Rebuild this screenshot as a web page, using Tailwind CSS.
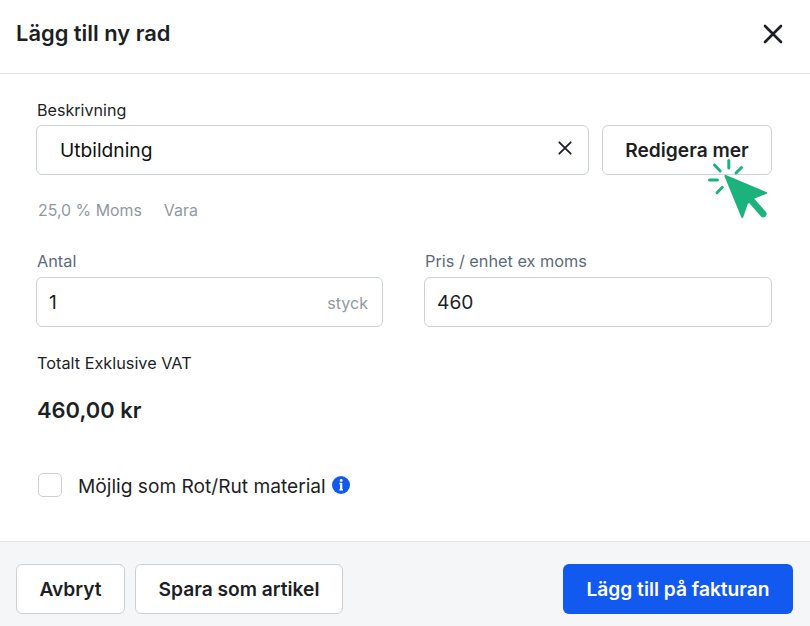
<!DOCTYPE html>
<html lang="sv">
<head>
  <meta charset="UTF-8" />
  <title>Lägg till ny rad</title>
  <script src="https://cdn.jsdelivr.net/npm/@tailwindcss/browser@4"></script>
</head>
<body class="bg-white font-['Inter',sans-serif] text-[#1d1f27]">
  <div class="flex flex-col h-screen overflow-hidden">
    <header class="flex items-center justify-between h-[74px] shrink-0 border-b border-[#e3e6e8] pl-4 pr-[27px] pb-[6px]">
      <h2 class="text-[21.9px] font-semibold leading-7 pb-0.5">Lägg till ny rad</h2>
      <button id="close-btn" type="button" aria-label="Stäng">
        <svg class="block w-5 h-5" viewBox="0 0 20 20" fill="none" stroke="currentColor" stroke-width="2.6" stroke-linecap="round"><path d="M2 2l16 16M18 2L2 18" /></svg>
      </button>
    </header>

    <main class="flex-1 pl-9 pr-[38px] pt-[25px]">
      <label for="description" class="block pl-px text-[16.1px] leading-[22px] mb-1">Beskrivning</label>
      <div class="flex gap-[13px]">
        <div class="flex items-center w-[553px] h-[50px] border border-[#cbd2d6] rounded-md pl-[23px] pr-4">
          <input id="description" type="text" value="Utbildning" class="flex-1 text-[19.2px] text-[#111111] outline-none" />
          <svg class="block w-[14px] h-[14px] mb-[5px]" viewBox="0 0 14 14" fill="none" stroke="currentColor" stroke-width="1.8" stroke-linecap="round"><path d="M1.3 1.3l11.4 11.4M12.7 1.3L1.3 12.7" /></svg>
        </div>
        <!-- Edit button with click pointer on top -->
        <div class="relative flex-1">
          <button type="button" class="w-full h-[50px] border border-[#cbd2d6] rounded-md text-[19.2px] font-semibold">Redigera mer</button>
          <svg class="absolute left-[98px] top-[25px] w-20 h-[75px]" viewBox="0 0 80 75" fill="none" stroke="#1bb37b" stroke-linecap="round">
            <path d="M28.8 10.5v7.5M14.5 15l5.7 6M41.5 17.5L36 23M9.5 30h8M22.3 37.3L17 42.7" stroke-width="3" />
            <path d="M51 50l12.3 14" stroke-width="6.5" />
            <path d="M25.5 26L66 43l-13.5 5.2-5.5 5L42.3 67z" fill="#1bb37b" stroke-width="2" stroke-linejoin="round" />
          </svg>
        </div>
      </div>

      <div class="flex gap-[22px] pl-0.5 mt-[25px] text-[15.9px] leading-[22px] text-[#91999f]">
        <span>25,0 % Moms</span>
        <span>Vara</span>
      </div>

      <div class="grid grid-cols-[347px_348px] gap-[41px] mt-[28px]">
        <div>
          <label for="quantity" class="block pl-px text-[16.3px] leading-[22px] mb-[5px] text-[#5b6b7b]">Antal</label>
          <div class="flex items-center h-[50px] border border-[#cbd2d6] rounded-md pl-3 pr-[14px]">
            <input id="quantity" type="text" value="1" class="flex-1 min-w-0 text-[19.2px] outline-none" />
            <span class="text-[16.1px] text-[#91999f] pt-0.5">styck</span>
          </div>
        </div>
        <div>
          <label for="price" class="block pl-px text-[16.3px] leading-[22px] mb-[5px] text-[#5b6b7b]">Pris / enhet ex moms</label>
          <div class="flex items-center h-[50px] border border-[#cbd2d6] rounded-md px-3">
            <input id="price" type="text" value="460" class="flex-1 min-w-0 text-[19.2px] outline-none" />
          </div>
        </div>
      </div>

      <p class="pl-px mt-[25px] text-[16.3px] leading-[22px]">Totalt Exklusive VAT</p>
      <p class="pl-px mt-[22px] text-[21.9px] leading-7 font-semibold">460,00 kr</p>

      <div class="flex items-center mt-[48px] pl-0.5">
        <input id="rotrut" type="checkbox" class="appearance-none w-6 h-6 border border-[#cbd2d6] rounded-[5px]" />
        <label for="rotrut" class="ml-4 pt-0.5 text-[19.15px] leading-6">Möjlig som Rot/Rut material</label>
        <svg class="block ml-1.5 w-[18px] h-[18px]" viewBox="0 0 18 18">
          <circle cx="9" cy="9" r="9" fill="#1259f0" />
          <path d="M7.4 7.6H9.2V14.4M7.4 13.8h3.6" fill="none" stroke="#fff" stroke-width="1.5" />
          <path d="M9.2 7v7" fill="none" stroke="#fff" stroke-width="2.2" />
          <circle cx="9.200" cy="4.400" r="1.400" fill="#fff" />
        </svg>
      </div>
    </main>

    <footer class="flex h-[85px] shrink-0 gap-[10px] border-t border-[#e1e5e8] bg-[#f5f6f8] pl-4 pr-[17px] pt-[22px] text-[19.2px] font-semibold">
      <button type="button" class="w-[109px] h-[50px] bg-white border border-[#cbd2d6] rounded-md">Avbryt</button>
      <button type="button" class="w-[208px] h-[50px] bg-white border border-[#cbd2d6] rounded-md">Spara som artikel</button>
      <button type="button" class="ml-auto w-[230px] h-[50px] bg-[#1259f0] text-white rounded-md">Lägg till på fakturan</button>
    </footer>
  </div>
</body>
</html>
